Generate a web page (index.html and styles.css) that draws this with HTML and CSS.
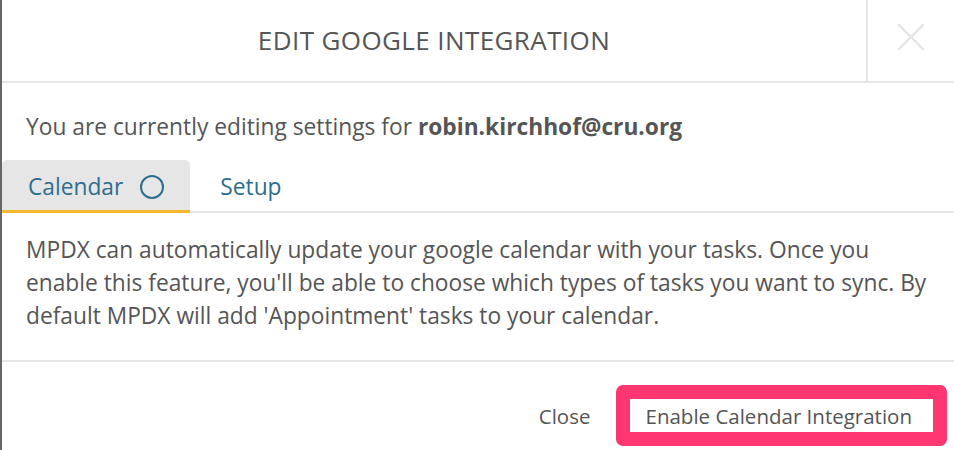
FILE: index.html
```html
<!DOCTYPE html>
<html lang="en">
<head>
    <meta charset="UTF-8">
    <title>Edit Google Integration</title>
    <link rel="stylesheet" href="styles.css">
</head>
<body>
<div class="modal">
    <div class="modal-header">
        <h3 class="modal-title">Edit Google Integration</h3>
        <button type="button" class="close-x" aria-label="Close">
            <svg width="26" height="26" viewBox="0 0 26 26">
                <path d="M1 1 L25 25 M25 1 L1 25" stroke="#e3e3e3" stroke-width="2.4" stroke-linecap="round" fill="none"/>
            </svg>
        </button>
    </div>

    <p class="intro">You are currently editing settings for <strong>robin.kirchhof@cru.org</strong></p>

    <ul class="tabs">
        <li class="tab active">Calendar <span class="spinner"></span></li>
        <li class="tab">Setup</li>
    </ul>

    <div class="tab-pane">
        <p>MPDX can automatically update your google calendar with your tasks. Once you enable this feature, you'll be able to choose which types of tasks you want to sync. By default MPDX will add 'Appointment' tasks to your calendar.</p>
    </div>

    <div class="modal-footer">
        <button type="button" class="btn-link">Close</button>
        <button type="button" class="btn-enable">Enable Calendar Integration</button>
    </div>
</div>
</body>
</html>
```

FILE: styles.css
```css
body {
    margin: 0;
    background: #fff;
    font-family: "Open Sans", "Liberation Sans", sans-serif;
    color: #555;
}

.modal {
    border-left: 2px solid #666;
    height: 450px;
    box-sizing: border-box;
    overflow: hidden;
}

.modal-header {
    display: flex;
    height: 81px;
    border-bottom: 2px solid #e6e6e6;
}

.modal-title {
    flex: 1;
    margin: 0;
    text-align: center;
    line-height: 81px;
    font-size: 26px;
    font-weight: normal;
    letter-spacing: 0.4px;
    text-transform: uppercase;
    color: #555;
}

.close-x {
    width: 88px;
    border: none;
    border-left: 2px solid #e6e6e6;
    background: none;
    padding: 0 0 8px 0;
    display: flex;
    align-items: center;
    justify-content: center;
}

.intro {
    margin: 27px 0 0 24px;
    font-size: 22.75px;
    line-height: 33px;
}

.intro strong {
    font-weight: bold;
}

.tabs {
    list-style: none;
    margin: 17px 0 0 0;
    padding: 0;
    display: flex;
    border-bottom: 2px solid #e6e6e6;
}

.tab {
    padding: 10px 25px 7px 26px;
    font-size: 22.75px;
    line-height: 33px;
    color: #2d6e8e;
    display: flex;
    align-items: center;
    margin-bottom: -2px;
    border-bottom: 3px solid transparent;
}

.tab + .tab {
    padding-left: 30px;
}

.tab.active {
    background: #e6e6e6;
    border-radius: 5px 5px 0 0;
    border-bottom-color: #f4b730;
}

.spinner {
    display: inline-block;
    width: 20px;
    height: 20px;
    border: 2.5px solid #2d6e8e;
    border-radius: 50%;
    margin-left: 17px;
    margin-right: 1px;
}

.tab-pane {
    padding: 20px 20px 28px 24px;
    border-bottom: 2px solid #e6e6e6;
}

.tab-pane p {
    margin: 0;
    font-size: 22.75px;
    line-height: 33px;
}

.modal-footer {
    display: flex;
    justify-content: flex-end;
    align-items: center;
    padding: 23px 7px 0 0;
}

.btn-link,
.btn-enable {
    font-family: inherit;
    font-size: 20.5px;
    color: #555;
    background: #fff;
    cursor: pointer;
}

.btn-link {
    border: none;
    padding: 0;
    margin-right: 26px;
}

.btn-enable {
    border: 14px solid #ff3670;
    border-radius: 7px;
    height: 61px;
    padding: 0 21px 0 15px;
}
```
